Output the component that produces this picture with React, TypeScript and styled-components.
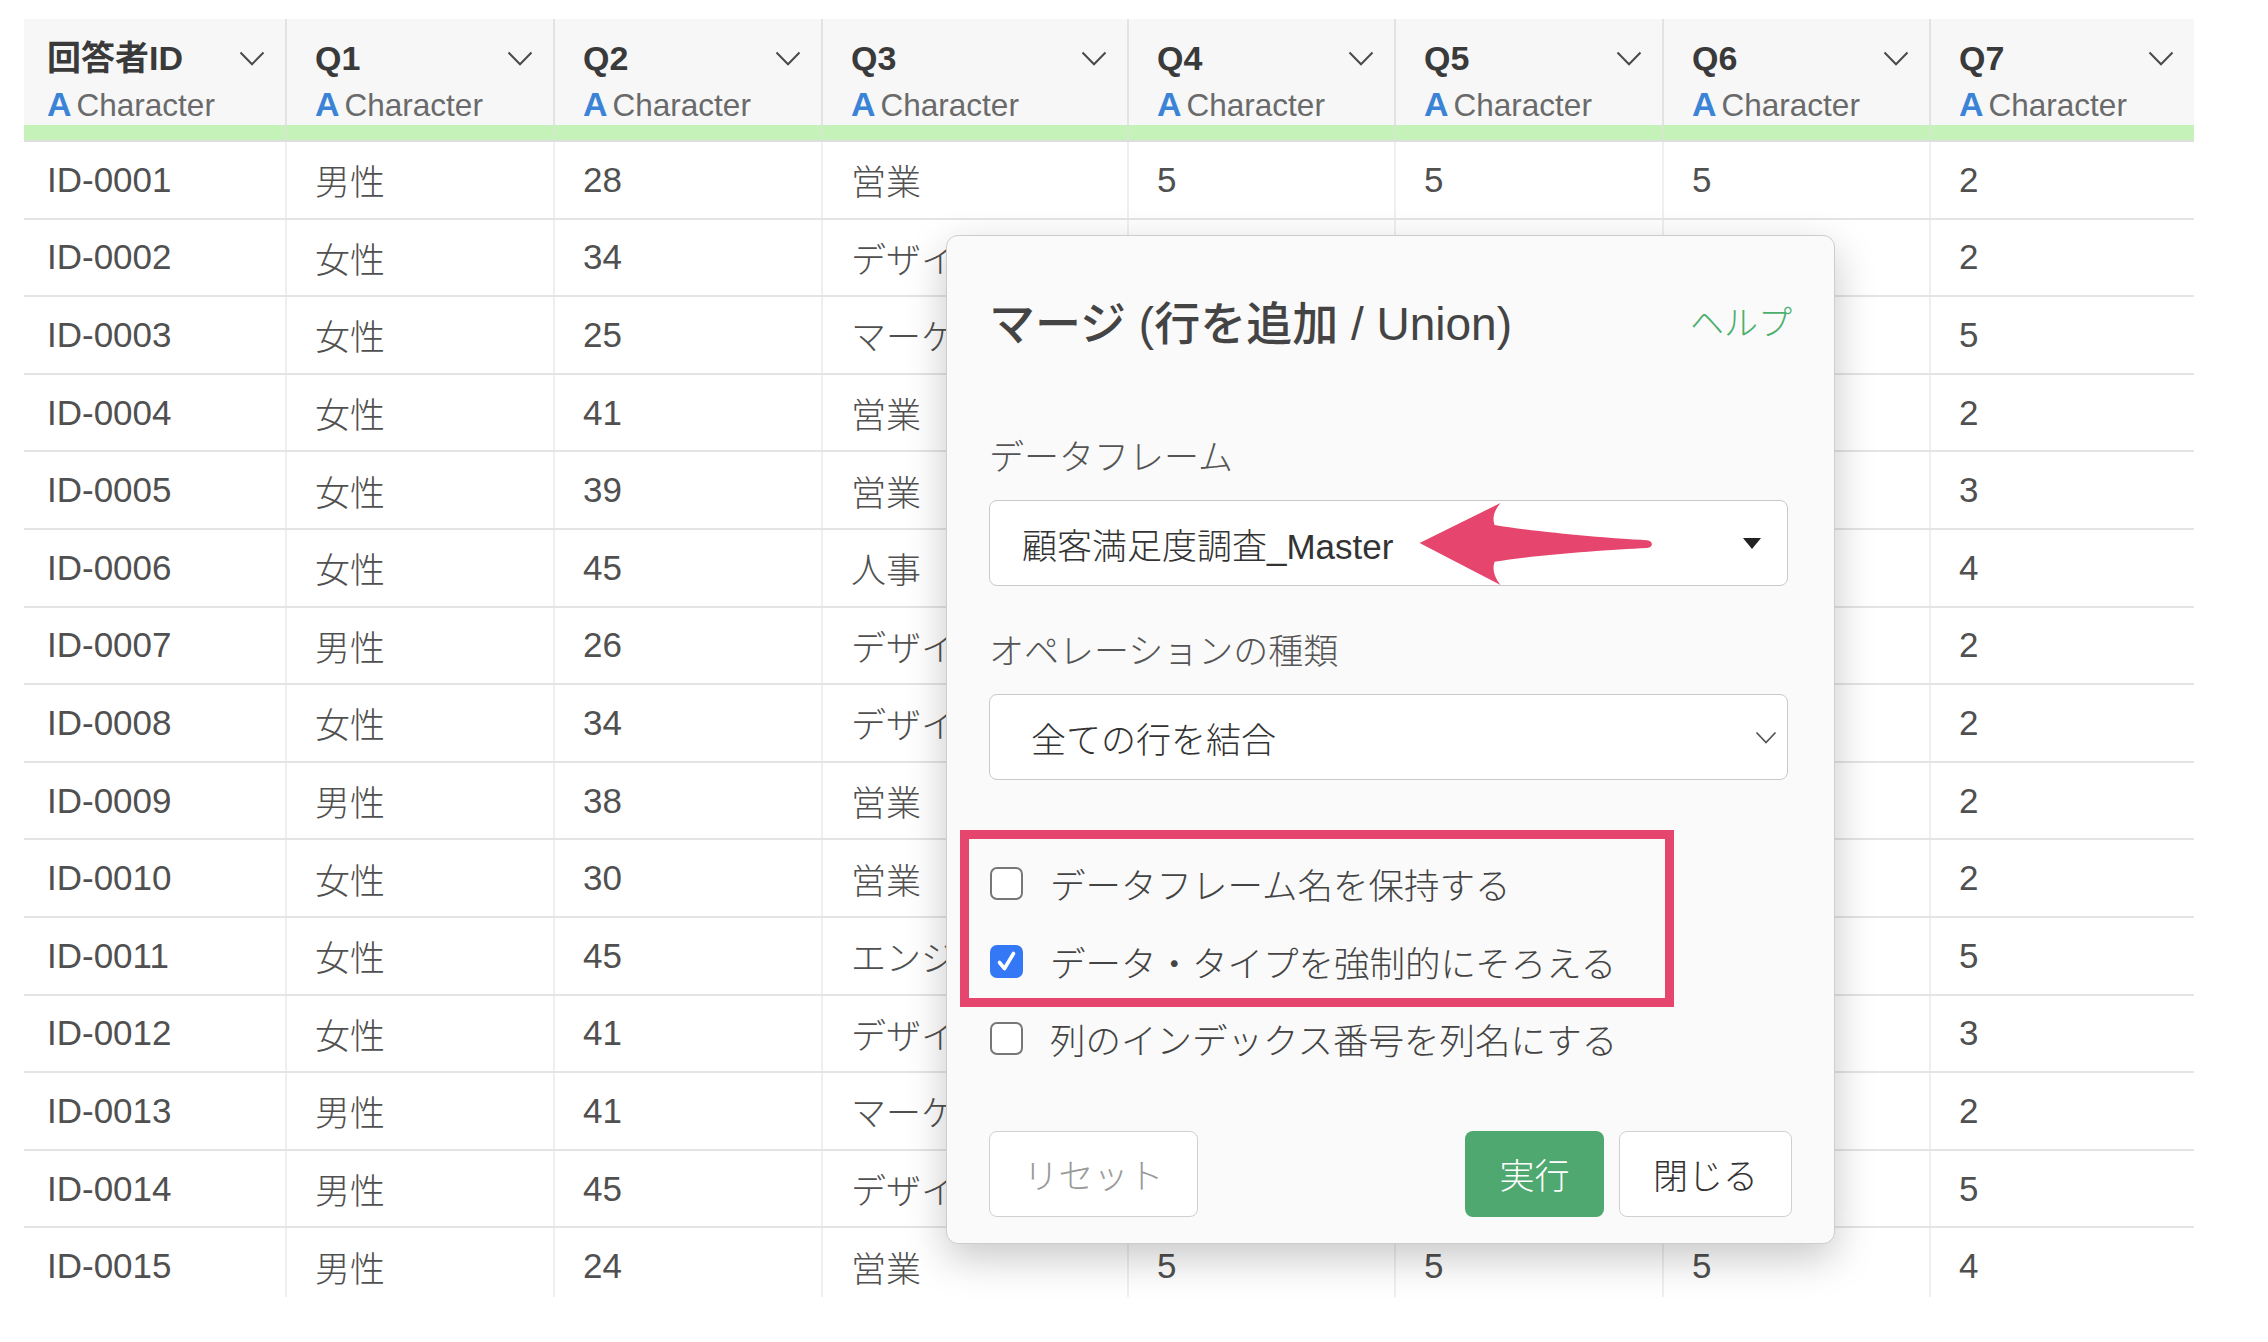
import styled, { createGlobalStyle } from 'styled-components';

const GlobalStyle = createGlobalStyle`
  html, body {
    margin: 0;
    padding: 0;
    background: #ffffff;
  }
  body {
    font-family: 'Liberation Sans', 'Noto Sans CJK JP', sans-serif;
  }
`;

const COLS = '263px 268px 268px 306px 267px 268px 267px 263px';

const headers = ['回答者ID', 'Q1', 'Q2', 'Q3', 'Q4', 'Q5', 'Q6', 'Q7'];

const rows: string[][] = [
  ['ID-0001', '男性', '28', '営業', '5', '5', '5', '2'],
  ['ID-0002', '女性', '34', 'デザイナー', '4', '3', '4', '2'],
  ['ID-0003', '女性', '25', 'マーケティング', '3', '4', '5', '5'],
  ['ID-0004', '女性', '41', '営業', '2', '3', '3', '2'],
  ['ID-0005', '女性', '39', '営業', '4', '4', '2', '3'],
  ['ID-0006', '女性', '45', '人事', '5', '3', '4', '4'],
  ['ID-0007', '男性', '26', 'デザイナー', '3', '2', '3', '2'],
  ['ID-0008', '女性', '34', 'デザイナー', '4', '5', '4', '2'],
  ['ID-0009', '男性', '38', '営業', '2', '3', '2', '2'],
  ['ID-0010', '女性', '30', '営業', '3', '4', '3', '2'],
  ['ID-0011', '女性', '45', 'エンジニア', '5', '5', '4', '5'],
  ['ID-0012', '女性', '41', 'デザイナー', '4', '3', '3', '3'],
  ['ID-0013', '男性', '41', 'マーケティング', '2', '2', '3', '2'],
  ['ID-0014', '男性', '45', 'デザイナー', '5', '4', '5', '5'],
  ['ID-0015', '男性', '24', '営業', '5', '5', '5', '4'],
];

function Chevron() {
  return (
    <svg width="26" height="15" viewBox="0 0 26 15">
      <polyline points="1.5,1.5 13,13.2 24.5,1.5" fill="none" stroke="#4a4a4a" strokeWidth="2" />
    </svg>
  );
}

function App() {
  return (
    <>
      <GlobalStyle />
      <Page>
        <Table>
          <HeaderRow>
            {headers.map((h, i) => (
              <HeaderCell key={h} $first={i === 0} $last={i === headers.length - 1}>
                <TitleLine>
                  <ColName>{h}</ColName>
                  <Chevron />
                </TitleLine>
                <TypeLine>
                  <TypeIcon>A</TypeIcon>Character
                </TypeLine>
              </HeaderCell>
            ))}
          </HeaderRow>
          <BarRow>
            {headers.map((h, i) => (
              <BarCell key={h} $last={i === headers.length - 1} />
            ))}
          </BarRow>
          {rows.map((r) => (
            <Row key={r[0]}>
              {r.map((v, i) => (
                <Cell key={i} $first={i === 0} $last={i === r.length - 1}>
                  {v}
                </Cell>
              ))}
            </Row>
          ))}
        </Table>

        <Dialog>
          <TitleRow>
            <DialogTitle>マージ (行を追加 / Union)</DialogTitle>
            <HelpLink>ヘルプ</HelpLink>
          </TitleRow>

          <FieldLabel $top={83}>データフレーム</FieldLabel>
          <SelectBox $pl={32} $pr={26}>
            <span>顧客満足度調査_Master</span>
            <svg width="18" height="11" viewBox="0 0 18 11">
              <polygon points="0,0 18,0 9,11" fill="#222" />
            </svg>
          </SelectBox>

          <FieldLabel $top={41}>オペレーションの種類</FieldLabel>
          <SelectBox $pl={41} $pr={10}>
            <span>全ての行を結合</span>
            <svg width="22" height="13" viewBox="0 0 22 13">
              <polyline points="1.5,1.5 11,11.5 20.5,1.5" fill="none" stroke="#555" strokeWidth="1.8" />
            </svg>
          </SelectBox>

          <Checks>
            <CheckRow>
              <CheckBox />
              データフレーム名を保持する
            </CheckRow>
            <CheckRow>
              <CheckBox $checked>
                <svg width="33" height="33" viewBox="0 0 33 33">
                  <path d="M9.5 17.5 L14.5 23.5 L23.5 8.5" fill="none" stroke="#fff" strokeWidth="3.6" strokeLinecap="round" strokeLinejoin="round" />
                </svg>
              </CheckBox>
              データ・タイプを強制的にそろえる
            </CheckRow>
            <CheckRow>
              <CheckBox />
              列のインデックス番号を列名にする
            </CheckRow>
          </Checks>

          <ButtonRow>
            <Button $variant="reset" $w={209}>リセット</Button>
            <Spacer />
            <Button $variant="primary" $w={139}>実行</Button>
            <Button $variant="default" $w={173}>閉じる</Button>
          </ButtonRow>

          <Highlight />
          <Arrow width="245" height="92" viewBox="0 0 245 92">
            <path
              d="M4.6 45 L85.5 5 C79 13 77 20 79.6 27 C120 34 190 40 232 42.3 C238.5 43 238.5 49.5 232 50 C190 52 120 57 79.6 63.7 C77 71 79 79 85.5 87 Z"
              fill="#e6466e"
            />
          </Arrow>
        </Dialog>
      </Page>
    </>
  );
}

const Page = styled.div`
  position: relative;
  width: 2268px;
  height: 1342px;
  box-sizing: border-box;
  padding: 19px 0 0 24px;
  overflow: hidden;
  background: #ffffff;
`;

const Table = styled.div`
  width: 2170px;
  height: 1278px;
  overflow: hidden;
`;

const HeaderRow = styled.div`
  display: grid;
  grid-template-columns: ${COLS};
  background: #f7f7f7;
`;

const HeaderCell = styled.div<{ $first?: boolean; $last?: boolean }>`
  box-sizing: border-box;
  height: 106px;
  padding: 19px 20px 0 ${(p) => (p.$first ? 23 : 28)}px;
  border-right: ${(p) => (p.$last ? 'none' : '2px solid #e3e3e3')};
`;

const TitleLine = styled.div`
  display: flex;
  align-items: center;
  justify-content: space-between;
  height: 40px;
`;

const ColName = styled.div`
  font-size: 34px;
  font-weight: 700;
  color: #3a3a3a;
  line-height: 40px;
  white-space: nowrap;
`;

const TypeLine = styled.div`
  margin-top: 8px;
  height: 36px;
  line-height: 36px;
  font-size: 31.5px;
  color: #6a6a6a;
  white-space: nowrap;
`;

const TypeIcon = styled.span`
  color: #3b83d6;
  font-weight: 700;
  font-size: 34px;
  margin-right: 5px;
`;

const BarRow = styled.div`
  display: grid;
  grid-template-columns: ${COLS};
  border-bottom: 2px solid #dedede;
`;

const BarCell = styled.div<{ $last?: boolean }>`
  height: 15px;
  background: #c5f2b8;
  border-right: ${(p) => (p.$last ? 'none' : '2px solid #d4e8cc')};
`;

const Row = styled.div`
  display: grid;
  grid-template-columns: ${COLS};
  box-sizing: border-box;
  height: 77.6px;
  border-bottom: 2px solid #e4e4e4;
`;

const Cell = styled.div<{ $first?: boolean; $last?: boolean }>`
  display: flex;
  align-items: center;
  padding: 0 20px 0 ${(p) => (p.$first ? 23 : 28)}px;
  font-size: 35px;
  font-weight: 300;
  color: #505050;
  white-space: nowrap;
  overflow: hidden;
  border-right: ${(p) => (p.$last ? 'none' : '2px solid #efefef')};
`;

const Dialog = styled.div`
  position: absolute;
  left: 946px;
  top: 235px;
  width: 889px;
  height: 1009px;
  box-sizing: border-box;
  display: flex;
  flex-direction: column;
  padding: 54px 46px 0 42px;
  background: #fafafa;
  border: 1px solid #cdcdcd;
  border-radius: 12px;
  box-shadow: 0 14px 40px rgba(0, 0, 0, 0.22);
`;

const TitleRow = styled.div`
  display: flex;
  align-items: center;
  justify-content: space-between;
  height: 60px;
`;

const DialogTitle = styled.div`
  font-size: 46px;
  font-weight: 500;
  color: #444444;
  white-space: nowrap;
`;

const HelpLink = styled.div`
  font-size: 34px;
  font-weight: 300;
  color: #4caf6e;
  margin-right: -4px;
`;

const FieldLabel = styled.div<{ $top: number }>`
  margin-top: ${(p) => p.$top}px;
  margin-bottom: 17px;
  font-size: 35px;
  font-weight: 300;
  line-height: 50px;
  color: #555555;
`;

const SelectBox = styled.div<{ $pl: number; $pr: number }>`
  display: flex;
  align-items: center;
  justify-content: space-between;
  box-sizing: border-box;
  height: 86px;
  padding: 0 ${(p) => p.$pr}px 0 ${(p) => p.$pl}px;
  background: #ffffff;
  border: 1.5px solid #c9c9c9;
  border-radius: 8px;
  font-size: 35px;
  font-weight: 300;
  color: #333333;
`;

const Checks = styled.div`
  margin-top: 65px;
  display: flex;
  flex-direction: column;
`;

const CheckRow = styled.div`
  display: flex;
  align-items: center;
  gap: 27px;
  height: 77.5px;
  padding-left: 1px;
  font-size: 35.5px;
  font-weight: 300;
  color: #444444;
  white-space: nowrap;
`;

const CheckBox = styled.div<{ $checked?: boolean }>`
  box-sizing: border-box;
  width: 33px;
  height: 33px;
  flex-shrink: 0;
  display: flex;
  align-items: center;
  justify-content: center;
  border-radius: 7px;
  background: ${(p) => (p.$checked ? '#3478f6' : '#ffffff')};
  border: ${(p) => (p.$checked ? 'none' : '2px solid #777777')};
`;

const ButtonRow = styled.div`
  display: flex;
  align-items: center;
  gap: 15px;
  margin-top: 53px;
  margin-right: -4px;
`;

const Spacer = styled.div`
  flex: 1;
`;

const Button = styled.button<{ $variant: 'reset' | 'primary' | 'default'; $w: number }>`
  box-sizing: border-box;
  width: ${(p) => p.$w}px;
  height: 86px;
  padding: 0;
  border-radius: 8px;
  font-family: 'Liberation Sans', 'Noto Sans CJK JP', sans-serif;
  font-size: 35px;
  font-weight: 300;
  background: ${(p) => (p.$variant === 'primary' ? '#4fa86f' : '#ffffff')};
  color: ${(p) => (p.$variant === 'primary' ? '#ffffff' : p.$variant === 'reset' ? '#9a9a9a' : '#333333')};
  border: ${(p) => (p.$variant === 'primary' ? 'none' : '1.5px solid #d0d0d0')};
`;

const Highlight = styled.div`
  position: absolute;
  left: 13px;
  top: 594px;
  width: 714px;
  height: 177px;
  box-sizing: border-box;
  border: 9px solid #e6466e;
  pointer-events: none;
`;

const Arrow = styled.svg`
  position: absolute;
  left: 468px;
  top: 262px;
`;

export default App;
